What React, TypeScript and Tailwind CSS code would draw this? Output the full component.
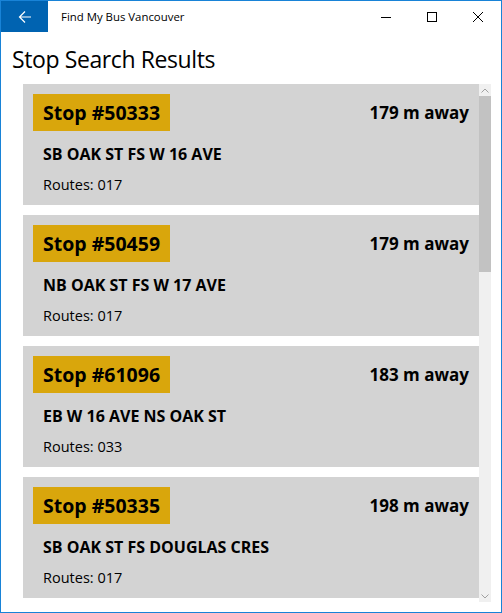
import React from 'react';

interface Stop {
  id: string;
  distance: string;
  name: string;
  routes: string;
}

const stops: Stop[] = [
  { id: '50333', distance: '179 m away', name: 'SB OAK ST FS W 16 AVE', routes: '017' },
  { id: '50459', distance: '179 m away', name: 'NB OAK ST FS W 17 AVE', routes: '017' },
  { id: '61096', distance: '183 m away', name: 'EB W 16 AVE NS OAK ST', routes: '033' },
  { id: '50335', distance: '198 m away', name: 'SB OAK ST FS DOUGLAS CRES', routes: '017' },
];

const StopCard: React.FC<{ stop: Stop }> = ({ stop }) => (
  <div className="bg-[#d3d3d3] px-[10px] pt-[10px] pb-[10px] mb-[10px] shrink-0">
    <div className="flex items-center justify-between">
      <div className="bg-[#d9a60c] h-[37px] flex items-center px-[10px] text-[19.5px] font-bold text-black whitespace-nowrap">
        Stop #{stop.id}
      </div>
      <div className="text-[17px] font-bold text-black whitespace-nowrap">{stop.distance}</div>
    </div>
    <div className="ml-[10px] mt-[13px] text-[16px] leading-[20px] font-bold text-black">{stop.name}</div>
    <div className="ml-[10px] mt-[11px] text-[14.5px] leading-[20px] text-black">Routes: {stop.routes}</div>
  </div>
);

export default function App() {
  return (
    <div
      className="w-[502px] h-[613px] border border-[#1883d7] bg-white flex flex-col overflow-hidden"
      style={{ fontFamily: '"Open Sans", "Noto Sans", sans-serif' }}
    >
      <div className="h-[31px] flex items-stretch shrink-0">
        <div className="w-[47px] bg-[#0063b1] flex items-center justify-center">
          <svg width="16" height="16" viewBox="0 0 16 16" fill="none" stroke="white" strokeWidth="1.2">
            <path d="M14 8H2.5M8 2.5L2.5 8L8 13.5" />
          </svg>
        </div>
        <div className="ml-[13px] flex items-center text-[11.4px] text-black">Find My Bus Vancouver</div>
        <div className="ml-auto flex">
          <div className="w-[46px] flex items-center justify-center">
            <svg width="10" height="10" viewBox="0 0 10 10" stroke="black" strokeWidth="1">
              <path d="M0 5.5H10" />
            </svg>
          </div>
          <div className="w-[46px] flex items-center justify-center">
            <svg width="10" height="10" viewBox="0 0 10 10" fill="none" stroke="black" strokeWidth="1">
              <rect x="0.5" y="0.5" width="9" height="9" />
            </svg>
          </div>
          <div className="w-[46px] flex items-center justify-center">
            <svg width="10" height="10" viewBox="0 0 10 10" stroke="black" strokeWidth="1">
              <path d="M0 0L10 10M10 0L0 10" />
            </svg>
          </div>
        </div>
      </div>
      <h1 className="ml-[11px] mt-[11px] text-[23px] leading-[32px] tracking-[-0.4px] text-black">Stop Search Results</h1>
      <div className="ml-[22px] mt-[9px] w-[468px] h-[518px] flex overflow-hidden">
        <div className="w-[456px] flex flex-col">
          {stops.map((s) => (
            <StopCard key={s.id} stop={s} />
          ))}
        </div>
        <div className="w-[12px] bg-[#f0f0f0] flex flex-col items-center">
          <div className="h-[12px] flex items-center justify-center">
            <svg width="8" height="5" viewBox="0 0 8 5" fill="none" stroke="#a0a0a0" strokeWidth="1">
              <path d="M0.5 4.5L4 1L7.5 4.5" />
            </svg>
          </div>
          <div className="w-full h-[176px] bg-[#c2c2c2]" />
          <div className="mt-auto h-[12px] flex items-center justify-center">
            <svg width="8" height="5" viewBox="0 0 8 5" fill="none" stroke="#a0a0a0" strokeWidth="1">
              <path d="M0.5 0.5L4 4L7.5 0.5" />
            </svg>
          </div>
        </div>
      </div>
    </div>
  );
}
